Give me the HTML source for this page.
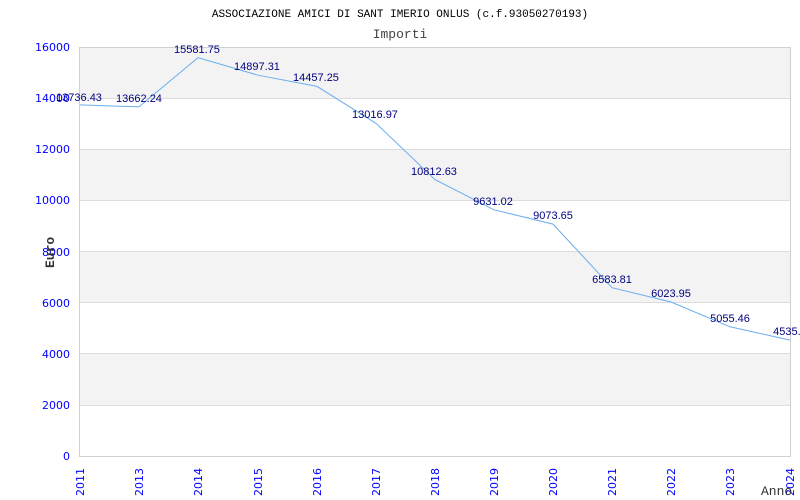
<!DOCTYPE html>
<html><head><meta charset="utf-8"><style>
html,body{margin:0;padding:0;background:#fff;width:800px;height:500px;overflow:hidden}
.d{font-family:"DejaVu Sans","Liberation Sans",sans-serif}
.m{font-family:"Liberation Mono",monospace}
.s{font-family:"Liberation Sans",sans-serif}
</style></head><body>
<svg width="800" height="500" xmlns="http://www.w3.org/2000/svg">
<text class="m" x="400" y="17" text-anchor="middle" font-size="11" fill="#000">ASSOCIAZIONE AMICI DI SANT IMERIO ONLUS (c.f.93050270193)</text>
<text class="m" x="400" y="38" text-anchor="middle" font-size="13" fill="#444">Importi</text>
<rect x="80" y="47" width="710" height="51" fill="#f3f3f3"/>
<rect x="80" y="149" width="710" height="51" fill="#f3f3f3"/>
<rect x="80" y="251" width="710" height="51" fill="#f3f3f3"/>
<rect x="80" y="354" width="710" height="51" fill="#f3f3f3"/>
<g stroke="#ddd" stroke-width="1">
<line x1="80" y1="98.5" x2="790" y2="98.5"/><line x1="80" y1="149.5" x2="790" y2="149.5"/>
<line x1="80" y1="200.5" x2="790" y2="200.5"/><line x1="80" y1="251.5" x2="790" y2="251.5"/>
<line x1="80" y1="302.5" x2="790" y2="302.5"/><line x1="80" y1="353.5" x2="790" y2="353.5"/>
<line x1="80" y1="405.5" x2="790" y2="405.5"/>
</g>
<rect x="79.5" y="47.5" width="711" height="409" fill="none" stroke="#d0d0d0"/>
<g class="d" font-size="11" fill="#0000ff" text-anchor="end">
<text x="70" y="51">16000</text><text x="70" y="102">14000</text><text x="70" y="153">12000</text>
<text x="70" y="204">10000</text><text x="70" y="256">8000</text><text x="70" y="307">6000</text>
<text x="70" y="358">4000</text><text x="70" y="409">2000</text><text x="70" y="460">0</text>
</g>
<g class="d" font-size="11" fill="#0000ff">
<text transform="translate(84,496) rotate(-90)">2011</text>
<text transform="translate(143,496) rotate(-90)">2013</text>
<text transform="translate(202,496) rotate(-90)">2014</text>
<text transform="translate(262,496) rotate(-90)">2015</text>
<text transform="translate(321,496) rotate(-90)">2016</text>
<text transform="translate(380,496) rotate(-90)">2017</text>
<text transform="translate(439,496) rotate(-90)">2018</text>
<text transform="translate(498,496) rotate(-90)">2019</text>
<text transform="translate(557,496) rotate(-90)">2020</text>
<text transform="translate(616,496) rotate(-90)">2021</text>
<text transform="translate(675,496) rotate(-90)">2022</text>
<text transform="translate(734,496) rotate(-90)">2023</text>
<text transform="translate(794,496) rotate(-90)">2024</text>
</g>
<text class="m" transform="translate(54,268) rotate(-90)" font-size="13" font-weight="bold" fill="#333">Euro</text>
<text class="m" x="761" y="495" font-size="13" fill="#333">Anno</text>
<polyline fill="none" stroke="#6aaef0" stroke-width="1" points="80,104.9 139,106.8 198,57.7 258,75.2 317,86.4 376,123.3 435,179.6 494,209.8 553,224.1 612,287.7 671,302 730,326.8 790,340.1"/>
<g class="s" font-size="11" fill="#000080" text-anchor="middle">
<text class="s" x="79" y="101">13736.43</text><text class="s" x="139" y="102">13662.24</text><text class="s" x="197" y="53">15581.75</text>
<text class="s" x="257" y="70">14897.31</text><text class="s" x="316" y="81">14457.25</text><text class="s" x="375" y="118">13016.97</text>
<text class="s" x="434" y="175">10812.63</text><text class="s" x="493" y="205">9631.02</text><text class="s" x="553" y="219">9073.65</text>
<text class="s" x="612" y="283">6583.81</text><text class="s" x="671" y="297">6023.95</text><text class="s" x="730" y="322">5055.46</text>
<text class="s" x="790" y="335">4535.5</text>
</g>
</svg>
</body></html>
